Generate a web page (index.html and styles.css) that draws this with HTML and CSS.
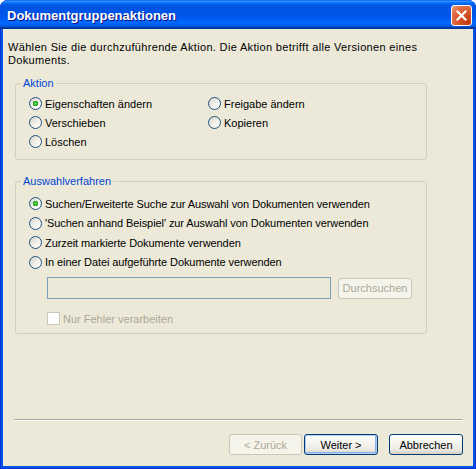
FILE: index.html
```html
<!DOCTYPE html>
<html lang="de">
<head>
    <meta charset="UTF-8">
    <title>Dokumentgruppenaktionen</title>
    <link rel="stylesheet" href="styles.css">
</head>
<body>
    <div class="window">
        <!-- Titelleiste -->
        <div class="titlebar">
            <span class="title">Dokumentgruppenaktionen</span>
            <button class="close" type="button">
                <svg width="11" height="11" viewBox="0 0 11 11">
                    <path d="M1.5 1.5 L9.5 9.5 M9.5 1.5 L1.5 9.5" stroke="#fff" stroke-width="2.2" stroke-linecap="square"/>
                </svg>
            </button>
        </div>

        <div class="client">
            <p class="intro">Wählen Sie die durchzuführende Aktion. Die Aktion betrifft alle Versionen eines Dokuments.</p>

            <!-- Aktion -->
            <fieldset class="group group-action">
                <legend>Aktion</legend>
                <div class="options two-col">
                    <label class="radio-row"><span class="radio checked"></span>Eigenschaften ändern</label>
                    <label class="radio-row"><span class="radio"></span>Freigabe ändern</label>
                    <label class="radio-row"><span class="radio"></span>Verschieben</label>
                    <label class="radio-row"><span class="radio"></span>Kopieren</label>
                    <label class="radio-row"><span class="radio"></span>Löschen</label>
                </div>
            </fieldset>

            <!-- Auswahlverfahren -->
            <fieldset class="group group-select">
                <legend>Auswahlverfahren</legend>
                <div class="options">
                    <label class="radio-row"><span class="radio checked"></span>Suchen/Erweiterte Suche zur Auswahl von Dokumenten verwenden</label>
                    <label class="radio-row"><span class="radio"></span>'Suchen anhand Beispiel' zur Auswahl von Dokumenten verwenden</label>
                    <label class="radio-row"><span class="radio"></span>Zurzeit markierte Dokumente verwenden</label>
                    <label class="radio-row"><span class="radio"></span>In einer Datei aufgeführte Dokumente verwenden</label>

                    <div class="file-row">
                        <input class="textbox" type="text" disabled>
                        <button class="btn small" type="button" disabled>Durchsuchen</button>
                    </div>

                    <label class="check-row disabled"><span class="checkbox"></span>Nur Fehler verarbeiten</label>
                </div>
            </fieldset>

            <!-- Schaltflächen -->
            <div class="footer">
                <div class="separator"></div>
                <div class="buttons">
                    <button class="btn" type="button" disabled>&lt; Zurück</button>
                    <button class="btn default" type="button">Weiter &gt;</button>
                    <button class="btn cancel" type="button">Abbrechen</button>
                </div>
            </div>
        </div>
    </div>
</body>
</html>
```

FILE: styles.css
```css
/* Allgemein */
body {
    margin: 0;
    background-color: #fff;
    font-family: "Liberation Sans", Arial, sans-serif;
    font-size: 11px;
    color: #000;
}

.window {
    width: 476px;
    height: 469px;
    display: flex;
    flex-direction: column;
    box-sizing: border-box;
    background-color: #0055e5;
    border-radius: 8px 8px 0 0;
    box-shadow: inset 1px 0 #0831d9, inset -1px 0 #0831d9, inset 0 -1px #0831d9;
    overflow: hidden;
}

/* Titelleiste */
.titlebar {
    height: 29px;
    box-sizing: border-box;
    display: flex;
    align-items: center;
    justify-content: space-between;
    padding: 2px 4px 0 7px;
    background: linear-gradient(180deg, #0058ee 0%, #3593ff 4%, #288eff 6%, #127dff 8%, #036ffc 10%, #0262ee 14%, #0057e5 20%, #0054e3 24%, #0055eb 56%, #005bf5 66%, #026afe 76%, #0062ef 86%, #0052d6 92%, #0040ab 94%, #003092 100%);
}

.title {
    color: #fff;
    font-weight: bold;
    font-size: 13px;
    text-shadow: 1px 1px #0f1089;
}

.close {
    width: 21px;
    height: 21px;
    padding: 0;
    display: flex;
    align-items: center;
    justify-content: center;
    border: 1px solid #fff;
    border-radius: 3px;
    background: radial-gradient(circle at 85% 85%, #c23c10 0%, #d9572b 45%, #e2714a 75%, #f2a98c 100%);
}

/* Inhalt */
.client {
    flex: 1;
    display: flex;
    flex-direction: column;
    margin: 0 3px 3px 3px;
    padding: 12px 0 11px;
    background-color: #ece9d8;
}

.intro {
    margin: 0 0 0 5px;
    width: 446px;
    line-height: 13px;
    letter-spacing: 0.33px;
}

/* Gruppenrahmen */
.group {
    width: 412px;
    box-sizing: border-box;
    margin: 10px 0 0 12px;
    padding: 0 8px 8px 5px;
    border: 1px solid #d0d0bf;
    border-radius: 3px;
}

.group legend {
    padding: 0 2px;
    line-height: 13px;
    color: #0046d5;
}

.options {
    padding: 4px 0 0 8px;
}

.two-col {
    display: grid;
    grid-template-columns: 179px auto;
}

.radio-row,
.check-row {
    height: 19px;
    display: flex;
    align-items: center;
    gap: 3px;
    white-space: nowrap;
}

.group-select {
    margin-top: 15px;
    padding-bottom: 5px;
}

.group-select .options {
    padding-top: 6px;
}

.group-select .radio-row {
    height: 19.5px;
    letter-spacing: -0.08px;
}

.radio {
    width: 13px;
    height: 13px;
    box-sizing: border-box;
    flex: none;
    border: 1px solid #1c5180;
    border-radius: 50%;
    background: linear-gradient(135deg, #d6d5cc 0%, #f2f1ea 55%, #fff 100%);
}

.radio.checked {
    background: radial-gradient(circle at center, #6ee26a 0, #35b830 1.5px, #1f9a1c 2.5px, transparent 3px), linear-gradient(135deg, #d6d5cc 0%, #f2f1ea 55%, #fff 100%);
}

/* Datei */
.file-row {
    display: flex;
    align-items: center;
    gap: 7px;
    margin: 5px 0 0 18px;
}

.textbox {
    width: 284px;
    height: 22px;
    box-sizing: border-box;
    margin: 0;
    border: 1px solid #7f9db9;
    background-color: #ece9d8;
}

.check-row {
    margin: 10px 0 0 18px;
}

.checkbox {
    width: 13px;
    height: 13px;
    box-sizing: border-box;
    flex: none;
    border: 1px solid #cac8bb;
    background-color: #fff;
}

.disabled {
    color: #aca899;
}

/* Schaltflächen */
.btn {
    width: 74px;
    height: 21px;
    padding: 0;
    font-family: "Liberation Sans", Arial, sans-serif;
    font-size: 11px;
    color: #000;
    border: 1px solid #003c74;
    border-radius: 3px;
    background: linear-gradient(180deg, #fff 0%, #f5f4ef 40%, #ecebe6 75%, #d6d0c5 100%);
}

.btn:disabled {
    color: #aca899;
    border-color: #c9c7ba;
    background: #f5f4ea;
}

.btn.default {
    box-shadow: inset 0 0 0 1px #b3cdf5, inset -1px -1px 0 1px #8db2e3;
}

.footer {
    margin-top: auto;
}

.separator {
    margin: 0 10px 0 11px;
    border-top: 1px solid #aca899;
    border-bottom: 1px solid #fff;
    height: 0;
}

.buttons {
    display: flex;
    justify-content: flex-end;
    margin-top: 13px;
    padding-right: 10px;
}

.buttons .btn:first-child {
    width: 73px;
    margin-right: 2px;
}

.buttons .cancel {
    margin-left: 11px;
}
```
